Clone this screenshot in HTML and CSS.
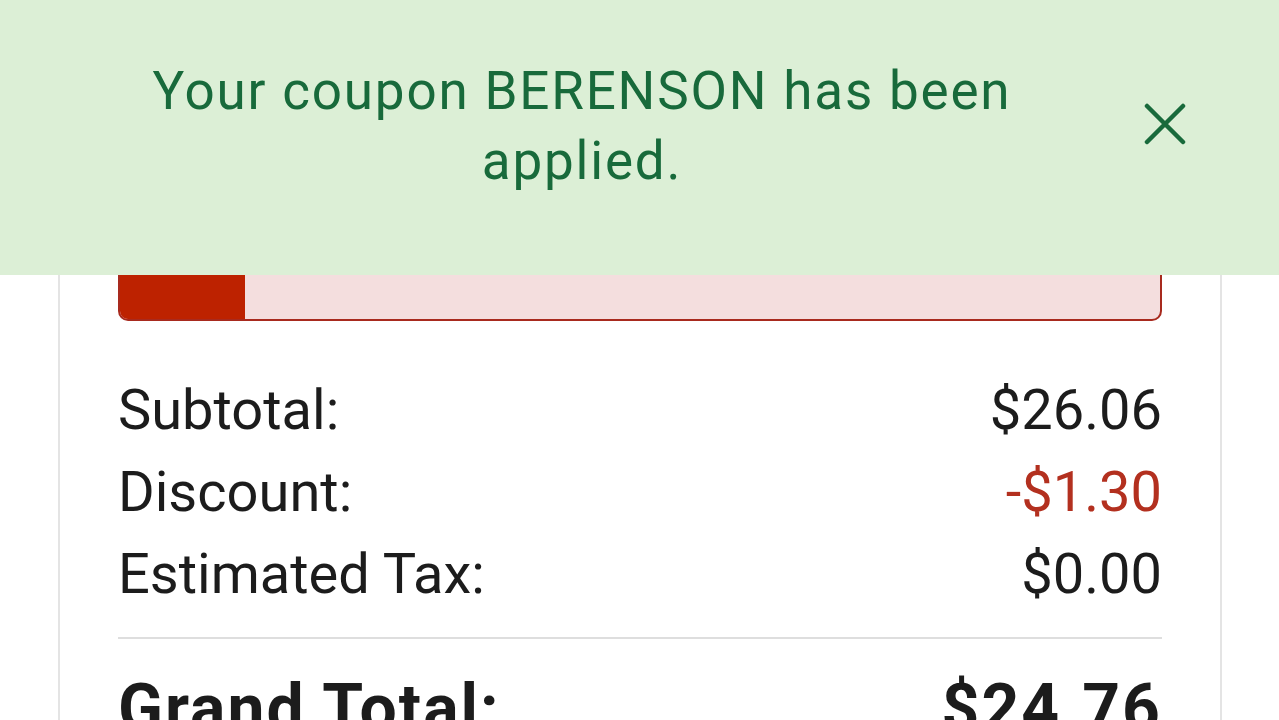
FILE: index.html
```html
<!DOCTYPE html>
<html lang="en">
<head>
  <meta charset="UTF-8" />
  <meta name="viewport" content="width=device-width, initial-scale=1.0"/>
  <title>Cart Summary</title>
  <link rel="stylesheet" href="styles.css">
</head>
<body>

  <div class="toast">
    <p class="toast-msg">Your coupon BERENSON has been applied.</p>
    <button class="toast-close" title="Close">
      <svg viewBox="0 0 42 42" width="42" height="42">
        <path d="M3 3 L39 39 M39 3 L3 39" stroke="currentColor" stroke-width="4.5" stroke-linecap="round" fill="none"/>
      </svg>
    </button>
  </div>

  <div class="card">
    <div class="progress">
      <div class="progress-fill"></div>
    </div>

    <div class="totals">
      <div class="row"><span>Subtotal:</span><span>$26.06</span></div>
      <div class="row"><span>Discount:</span><span class="discount">-$1.30</span></div>
      <div class="row"><span>Estimated Tax:</span><span>$0.00</span></div>
    </div>

    <div class="row grand"><span>Grand Total:</span><span>$24.76</span></div>
  </div>

</body>
</html>
```

FILE: styles.css
```css
body {
  margin: 0;
  font-family: Roboto, "Noto Sans", Arial, sans-serif;
  color: #1c1c1c;
  background: #fff;
  overflow: hidden;
}

.toast {
  position: absolute;
  top: 0;
  left: 0;
  right: 0;
  height: 275px;
  box-sizing: border-box;
  padding: 56px 93px 0 0;
  display: flex;
  align-items: flex-start;
  background-color: #dcefd6;
  color: #186a3b;
  z-index: 2;
}

.toast-msg {
  width: 900px;
  margin: 0 0 0 132px;
  text-align: center;
  font-size: 53px;
  line-height: 70px;
  letter-spacing: 1.8px;
}

.toast-close {
  width: 42px;
  height: 42px;
  margin: 47px 0 0 auto;
  padding: 0;
  border: none;
  background: none;
  color: #186a3b;
  cursor: pointer;
}

.toast-close svg {
  display: block;
}

.card {
  width: 1164px;
  margin-left: 58px;
  box-sizing: border-box;
  padding: 250px 58px 0;
  border-left: 2px solid #e4e4e4;
  border-right: 2px solid #e4e4e4;
  min-height: 720px;
}

.progress {
  display: flex;
  height: 71px;
  box-sizing: border-box;
  border: 2px solid #a82a1e;
  border-radius: 10px;
  background-color: #f4dede;
  overflow: hidden;
}

.progress-fill {
  width: 125px;
  background-color: #bd2200;
}

.totals {
  margin-top: 48px;
  padding-bottom: 22px;
  border-bottom: 2px solid #dedede;
}

.row {
  display: flex;
  justify-content: space-between;
  font-size: 56px;
  line-height: 82px;
}

.discount {
  color: #b3301f;
}

.row.grand {
  margin-top: 35px;
  font-size: 66px;
  font-weight: bold;
  line-height: 70px;
  letter-spacing: 2px;
}
```
